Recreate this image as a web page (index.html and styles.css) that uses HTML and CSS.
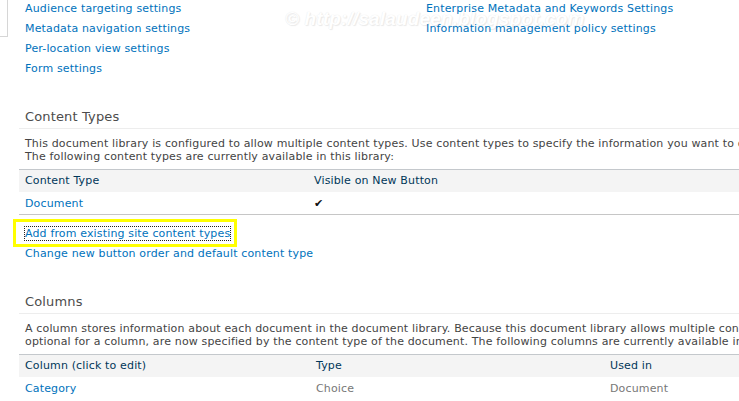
FILE: index.html
```html
<!DOCTYPE html>
<html>
<head>
<meta charset="utf-8">
<link rel="stylesheet" href="styles.css">
</head>
<body>
<div class="page">
  <div class="nav"><div class="nav-box"></div></div>
  <div class="main">
    <div class="settings">
      <div class="settings-col left">
        <a href="#">Audience targeting settings</a>
        <a href="#">Metadata navigation settings</a>
        <a href="#">Per-location view settings</a>
        <a href="#">Form settings</a>
      </div>
      <div class="settings-col">
        <a href="#">Enterprise Metadata and Keywords Settings</a>
        <a href="#">Information management policy settings</a>
      </div>
    </div>

    <section class="section ct">
      <h2 class="heading">Content Types</h2>
      <p class="desc">This document library is configured to allow multiple content types. Use content types to specify the information you want to display about an item, in addition to its policies, workflows, or other behavior.<br>The following content types are currently available in this library:</p>
      <table class="grid ct-grid">
        <thead>
          <tr><th class="c1">Content Type</th><th>Visible on New Button</th></tr>
        </thead>
        <tbody>
          <tr><td class="c1"><a href="#">Document</a></td><td class="check">&#10004;</td></tr>
        </tbody>
      </table>
      <div class="actions">
        <div class="action highlight"><a href="#" class="focused">Add from existing site content types</a></div>
        <div class="action"><a href="#">Change new button order and default content type</a></div>
      </div>
    </section>

    <section class="section cols">
      <h2 class="heading">Columns</h2>
      <p class="desc">A column stores information about each document in the document library. Because this document library allows multiple content types, some column settings, such as whether information is required or<br>optional for a column, are now specified by the content type of the document. The following columns are currently available in this document library:</p>
      <table class="grid col-grid">
        <thead>
          <tr><th class="c1">Column (click to edit)</th><th class="c2">Type</th><th>Used in</th></tr>
        </thead>
        <tbody>
          <tr><td class="c1"><a href="#">Category</a></td><td class="muted c2">Choice</td><td class="muted">Document</td></tr>
        </tbody>
      </table>
    </section>
  </div>
  <div class="watermark">© http://salaudeen.blogspot.com</div>
</div>
</body>
</html>
```

FILE: styles.css
```css
html, body {
  margin: 0;
  padding: 0;
  background: #ffffff;
  overflow: hidden;
}
body {
  font-family: "DejaVu Sans", Verdana, sans-serif;
  font-size: 11px;
  letter-spacing: 0.15px;
  color: #444444;
}
.page {
  position: relative;
  display: flex;
  width: 1100px;
  height: 401px;
}
.nav {
  width: 8px;
  flex: none;
}
.nav-box {
  height: 37px;
  border-right: 1px solid #d6d6d6;
  border-bottom: 1px solid #d6d6d6;
  box-sizing: border-box;
}
.main {
  position: relative;
  z-index: 1;
  margin-left: 11px;
  padding-top: 2px;
  flex: 1;
}
a {
  color: #0072bc;
  text-decoration: none;
}
.settings {
  display: flex;
  padding-left: 6px;
}
.settings-col {
  display: flex;
  flex-direction: column;
  gap: 6px;
  line-height: 14px;
}
.settings-col.left {
  width: 401px;
}
.section {
  margin: 0;
}
.ct {
  margin-top: 33px;
}
.cols {
  margin-top: 33px;
}
.heading {
  margin: 0;
  font-weight: normal;
  font-size: 13px;
  line-height: 16px;
  color: #4c4c4c;
  padding: 0 0 3px 6px;
  border-bottom: 1px solid #ededed;
}
.desc {
  margin: 8px 0 6px 0;
  padding-left: 6px;
  line-height: 13px;
  white-space: nowrap;
  color: #444444;
}
.grid {
  border-collapse: collapse;
  width: 1000px;
  line-height: 13px;
}
.grid th {
  text-align: left;
  font-weight: normal;
  color: #003759;
  background: #f4f4f4;
  border-top: 1px solid #c4c8cc;
  padding: 4px 6px 5px 6px;
  white-space: nowrap;
}
.grid td {
  padding: 5px 6px 4px 6px;
  white-space: nowrap;
}
.ct-grid td {
  border-bottom: 1px solid #c6c6c6;
}
.ct-grid .c1 {
  width: 277px;
}
.col-grid .c1 {
  width: 279px;
}
.col-grid .c2 {
  width: 282px;
}
.check {
  color: #111111;
  font-size: 11px;
}
.muted {
  color: #777777;
}
.actions {
  margin-top: 12px;
  padding-left: 6px;
  display: flex;
  flex-direction: column;
  gap: 6px;
  line-height: 14px;
}
.action {
  position: relative;
}
.highlight::after {
  content: "";
  position: absolute;
  left: -12px;
  top: -8px;
  width: 224px;
  height: 28px;
  border: 3px solid #ffff00;
  box-sizing: border-box;
}
.focused {
  outline: 1px dotted #222222;
}
.watermark {
  position: absolute;
  z-index: 0;
  left: 285px;
  top: 8px;
  font-family: "Liberation Sans", Arial, sans-serif;
  font-weight: bold;
  font-style: italic;
  font-size: 19px;
  color: #ffffff;
  text-shadow: 0 0 1px #dcdcdc, 1px 1px 1px #e4e4e4;
  opacity: 0.75;
  white-space: nowrap;
}
```
